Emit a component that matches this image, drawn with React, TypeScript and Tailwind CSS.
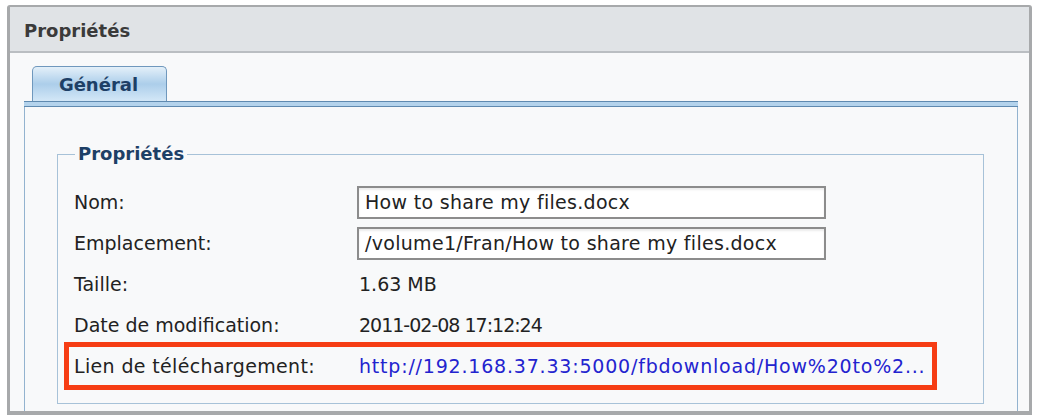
import React from "react";

const rows = [
  { label: "Nom:", value: "How to share my files.docx", input: true },
  { label: "Emplacement:", value: "/volume1/Fran/How to share my files.docx", input: true },
  { label: "Taille:", value: "1.63 MB" },
  { label: "Date de modification:", value: "2011-02-08 17:12:24", tight: true },
];

export default function App() {
  return (
    <div className="w-[1037px] h-[415px] bg-white overflow-hidden pl-[7px] pt-[5px] font-['DejaVu_Sans',sans-serif]">
      {/* window frame */}
      <div className="w-[1025px] h-[410px] flex flex-col border-t-2 border-l-[3px] border-r-[3px] border-b-[4px] border-[#a7a9ab] rounded-t-[3px] bg-[#f8f9fa]">
        {/* title bar */}
        <div className="h-[46px] shrink-0 flex items-center pl-[14px] pt-[3px] bg-[#e0e3e6] border-b-2 border-[#babec2]">
          <span className="text-[18px] font-bold text-[#3a3a3a]">Propriétés</span>
        </div>

        {/* body */}
        <div className="flex-1 flex flex-col pt-[13px] pl-[14px] pr-[11px]">
          {/* tabs */}
          <div className="flex pl-[8px]">
            <div className="w-[135px] h-[35px] flex items-center justify-center rounded-t-[5px] border border-b-0 border-[#6f98bd] bg-gradient-to-b from-[#e4f0f9] via-[#acceea] to-[#d3e7f7]">
              <span className="text-[18px] font-bold text-[#1d3f66] -ml-[2px]">Général</span>
            </div>
          </div>
          <div className="h-[6px] shrink-0 border-t border-b border-[#5f8ab0] bg-[#b4d3ec]" />

          {/* panel */}
          <div className="flex-1 border-l border-r border-[#93b3cf] pt-[36px] pl-[32px] pr-[33px]">
            <fieldset className="border border-[#a7c2d8] pl-[16px] pt-[17px] pb-[13px]">
              <legend className="ml-[1px] px-[3px] text-[18px] leading-[22px] font-bold text-[#1d3f66]">
                Propriétés
              </legend>

              {rows.map((row) => (
                <div key={row.label} className="h-[41px] flex items-center text-[19px] text-[#222]">
                  <div className="w-[283px] shrink-0">{row.label}</div>
                  {row.input ? (
                    <div className="w-[469px] h-[33px] flex items-center pl-[6px] tracking-[0.3px] bg-white border-2 border-[#8c8c8c] shadow-[inset_0_2px_2px_rgba(0,0,0,0.08)]">
                      {row.value}
                    </div>
                  ) : (
                    <div className={row.tight ? "pl-[2px] tracking-[-1px]" : "pl-[2px]"}>{row.value}</div>
                  )}
                </div>
              ))}

              {/* highlighted download link */}
              <div className="-ml-[10px] -mt-[4px] w-[873px] h-[48px] flex items-center pl-[5px] border-[5px] border-[#f63d14] text-[19px]">
                <div className="w-[283px] shrink-0 text-[#222] tracking-[0.35px]">Lien de téléchargement:</div>
                <a className="pl-[2px] text-[#2323cf] tracking-[0.8px]">http://192.168.37.33:5000/fbdownload/How%20to%2...</a>
              </div>
            </fieldset>
          </div>
        </div>
      </div>
    </div>
  );
}
